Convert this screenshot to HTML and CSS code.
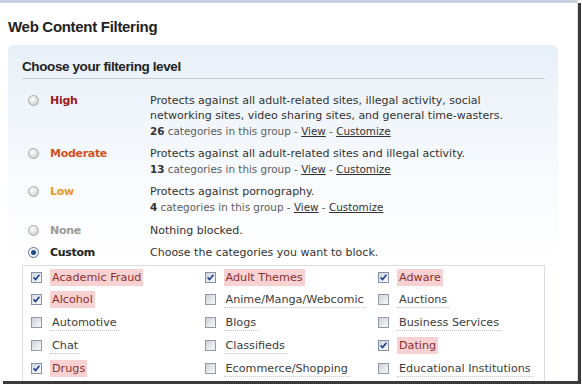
FILE: index.html
```html
<!DOCTYPE html>
<html lang="en">
<head>
<meta charset="utf-8">
<title>Web Content Filtering</title>
<link rel="stylesheet" href="styles.css">
</head>
<body>
<div class="frame">
  <h1 class="title">Web Content Filtering</h1>
  <section class="panel">
    <h2 class="panel-title">Choose your filtering level</h2>
    <div class="levels">
      <div class="level">
        <span class="radio"></span>
        <span class="level-name high">High</span>
        <div class="level-desc">
          <p class="desc">Protects against all adult-related sites, illegal activity, social<br>networking sites, video sharing sites, and general time-wasters.</p>
          <p class="meta"><b>26</b> categories in this group - <a href="#">View</a> - <a href="#">Customize</a></p>
        </div>
      </div>
      <div class="level">
        <span class="radio"></span>
        <span class="level-name moderate">Moderate</span>
        <div class="level-desc">
          <p class="desc">Protects against all adult-related sites and illegal activity.</p>
          <p class="meta"><b>13</b> categories in this group - <a href="#">View</a> - <a href="#">Customize</a></p>
        </div>
      </div>
      <div class="level">
        <span class="radio"></span>
        <span class="level-name low">Low</span>
        <div class="level-desc">
          <p class="desc">Protects against pornography.</p>
          <p class="meta"><b>4</b> categories in this group - <a href="#">View</a> - <a href="#">Customize</a></p>
        </div>
      </div>
      <div class="level">
        <span class="radio"></span>
        <span class="level-name none">None</span>
        <div class="level-desc">
          <p class="desc">Nothing blocked.</p>
        </div>
      </div>
      <div class="level">
        <span class="radio selected"></span>
        <span class="level-name custom">Custom</span>
        <div class="level-desc">
          <p class="desc">Choose the categories you want to block.</p>
        </div>
      </div>
    </div>
    <div class="categories">
      <div class="cat on"><span class="cb"></span><span class="cat-label">Academic Fraud</span></div>
      <div class="cat on"><span class="cb"></span><span class="cat-label">Adult Themes</span></div>
      <div class="cat on"><span class="cb"></span><span class="cat-label">Adware</span></div>
      <div class="cat on"><span class="cb"></span><span class="cat-label">Alcohol</span></div>
      <div class="cat"><span class="cb"></span><span class="cat-label">Anime/Manga/Webcomic</span></div>
      <div class="cat"><span class="cb"></span><span class="cat-label">Auctions</span></div>
      <div class="cat"><span class="cb"></span><span class="cat-label">Automotive</span></div>
      <div class="cat"><span class="cb"></span><span class="cat-label">Blogs</span></div>
      <div class="cat"><span class="cb"></span><span class="cat-label">Business Services</span></div>
      <div class="cat"><span class="cb"></span><span class="cat-label">Chat</span></div>
      <div class="cat"><span class="cb"></span><span class="cat-label">Classifieds</span></div>
      <div class="cat on"><span class="cb"></span><span class="cat-label">Dating</span></div>
      <div class="cat on"><span class="cb"></span><span class="cat-label">Drugs</span></div>
      <div class="cat"><span class="cb"></span><span class="cat-label">Ecommerce/Shopping</span></div>
      <div class="cat"><span class="cb"></span><span class="cat-label">Educational Institutions</span></div>
    </div>
  </section>
</div>
</body>
</html>
```

FILE: styles.css
```css
html, body {
  margin: 0;
  padding: 0;
  background: #fff;
}

body {
  width: 582px;
  height: 387px;
  overflow: hidden;
  font-family: "DejaVu Sans", Verdana, sans-serif;
  color: #333;
}

.frame {
  box-sizing: border-box;
  width: 578px;
  height: 381px;
  overflow: hidden;
  background: #fff;
  border-top: 3px solid #c9d1dc;
  border-right: 1px solid #e2e2e2;
  box-shadow: 3px 3px 0 #3a3a3a;
  padding: 15px 0 0 8px;
}

.title {
  margin: 0 0 9px;
  font-family: "Liberation Sans", Arial, sans-serif;
  font-size: 15px;
  line-height: 18px;
  font-weight: bold;
  letter-spacing: -0.3px;
  color: #222;
}

.panel {
  width: 550px;
  box-sizing: border-box;
  padding: 14px 13px 0 14px;
  border-radius: 6px 6px 0 0;
  background: linear-gradient(to bottom, #e8f0f8 0, #f3f7fb 90px, #fbfcfe 160px, #fff 220px);
  min-height: 340px;
}

.panel-title {
  margin: 0;
  padding-bottom: 3px;
  border-bottom: 1px solid #c9ced5;
  font-family: "Liberation Sans", Arial, sans-serif;
  font-size: 13.5px;
  line-height: 16px;
  font-weight: bold;
  letter-spacing: -0.4px;
  color: #222;
}

.levels {
  display: flex;
  flex-direction: column;
  gap: 7.2px;
  margin-top: 14px;
}

.level {
  display: grid;
  grid-template-columns: 28px 100px 1fr;
  align-items: start;
}

.radio {
  box-sizing: border-box;
  width: 11px;
  height: 11px;
  margin: 2px 0 0 6px;
  border-radius: 50%;
  border: 1px solid #a9a9a9;
  background: radial-gradient(circle at 40% 35%, #ffffff 0, #e4e4e4 45%, #c4c4c4 100%);
  display: flex;
  align-items: center;
  justify-content: center;
}

.radio.selected {
  border-color: #5f7390;
  background: radial-gradient(circle at 40% 35%, #ffffff 0, #e2e8f0 100%);
}

.radio.selected::after {
  content: "";
  width: 5px;
  height: 5px;
  border-radius: 50%;
  background: #1f4c8f;
}

.level-name {
  font-size: 11px;
  line-height: 15px;
  font-weight: bold;
  letter-spacing: -0.3px;
}

.high { color: #9e1b1b; }
.moderate { color: #d2521f; }
.low { color: #e8971f; }
.none { color: #9a9a9a; }
.custom { color: #222; }

.desc {
  margin: 0;
  font-size: 11px;
  line-height: 15px;
  color: #333;
}

.meta {
  margin: 0;
  font-size: 10.4px;
  line-height: 16px;
  color: #5c5c5c;
}

.meta b {
  color: #333;
}

.meta a {
  color: #333;
  text-decoration: underline;
}

.categories {
  margin-top: 5px;
  border: 1px solid #d9dde2;
  background: #fff;
  padding: 0 0 0 8px;
  display: grid;
  grid-template-columns: 173.5px 173.5px 1fr;
  grid-auto-rows: 22.75px;
  height: 140px;
}

.cat {
  display: flex;
  align-items: center;
  gap: 8px;
}

.cb {
  flex: none;
  box-sizing: border-box;
  width: 11px;
  height: 11px;
  border: 1px solid #939aa3;
  background: linear-gradient(135deg, #cdd1d6 0, #e8eaed 60%, #f8f8f9 100%);
}

.cat.on .cb {
  border-color: #8690a2;
  background:
    url("data:image/svg+xml;utf8,<svg xmlns='http://www.w3.org/2000/svg' width='9' height='9' viewBox='0 0 9 9'><path d='M1.6 4.4 L3.6 6.6 L7.4 1.8' fill='none' stroke='%23223f8f' stroke-width='1.6'/></svg>") center / 9px 9px no-repeat,
    linear-gradient(135deg, #cfd6e1 0, #eaeef4 60%, #f8f9fc 100%);
}

.cat-label {
  font-size: 11.2px;
  line-height: 15px;
  padding: 1px 2px 0;
  color: #3c3c3c;
  border-bottom: 1px dotted #c4c4c4;
}

.cat.on .cat-label {
  background: #f8d2d2;
  color: #8a3030;
  border-bottom-color: #f8d2d2;
}
```
